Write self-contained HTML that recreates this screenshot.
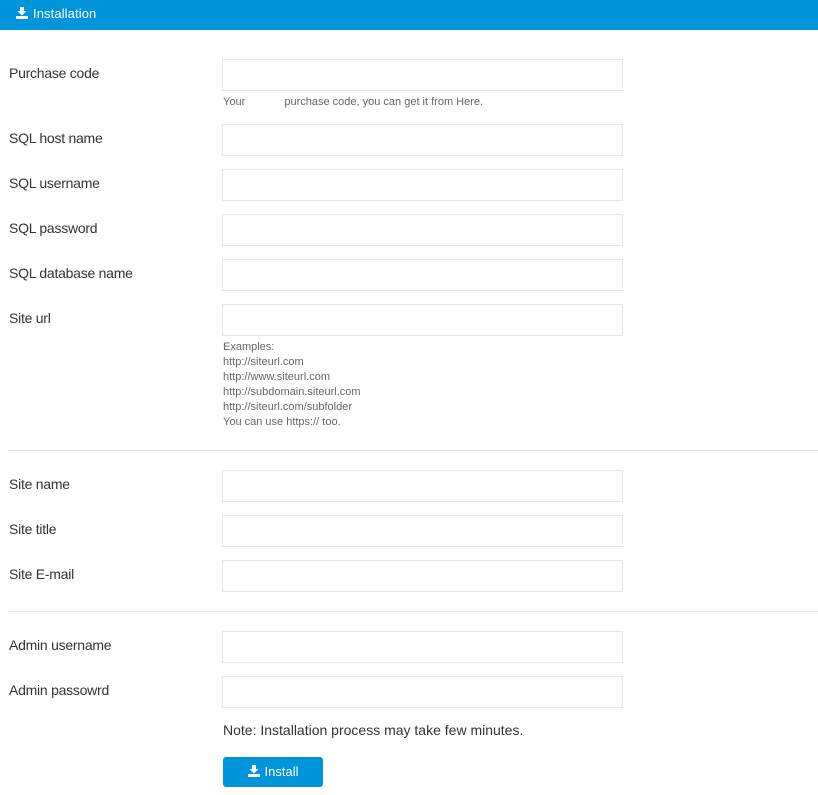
<!DOCTYPE html>
<html><head><meta charset="utf-8"><style>
*{margin:0;padding:0;box-sizing:border-box}
body{width:818px;height:795px;background:#fff;font-family:"Liberation Sans",sans-serif;color:#333;position:relative;overflow:hidden}
.hd{position:absolute;left:0;top:0;width:818px;height:30px;background:#0095da;color:#fff;font-size:13px;line-height:28px;padding-left:16px;letter-spacing:0.1px}
.hd svg,.btn svg{vertical-align:-1px;margin-right:5px}
.l{position:absolute;left:9px;font-size:14px;color:#333;letter-spacing:-0.25px}
.i{position:absolute;left:222px;width:401px;height:32px;border:1px solid #e6e6e6;background:#fff}
.h{position:absolute;left:223px;font-size:11px;color:#666;line-height:15px}
.hr{position:absolute;left:8px;width:810px;height:1px;background:#e5e5e5}
.note{position:absolute;left:223px;top:722px;font-size:14px;color:#333}
.btn{position:absolute;left:223px;top:757px;width:100px;height:30px;background:#0095da;border-radius:3px;color:#fff;font-size:13px;line-height:30px;text-align:center}
</style></head><body>
<div class="hd"><svg width="12" height="12" viewBox="0 0 12 12"><path d="M4 0h4v4h2.5L6 8.5 1.5 4H4z" fill="#fff"/><rect x="0" y="9" width="12" height="3" fill="#fff"/></svg>Installation</div>

<div class="l" style="top:65px">Purchase code</div><div class="i" style="top:59px"></div>
<div class="h" style="top:95px">Your <span style="display:inline-block;width:33px"></span> purchase code, you can get it from Here.</div>
<div class="l" style="top:130px">SQL host name</div><div class="i" style="top:124px"></div>
<div class="l" style="top:175px">SQL username</div><div class="i" style="top:169px"></div>
<div class="l" style="top:220px">SQL password</div><div class="i" style="top:214px"></div>
<div class="l" style="top:265px">SQL database name</div><div class="i" style="top:259px"></div>
<div class="l" style="top:310px">Site url</div><div class="i" style="top:304px"></div>
<div class="h" style="top:340px">Examples:<br>http://siteurl.com<br>http://www.siteurl.com<br>http://subdomain.siteurl.com<br>http://siteurl.com/subfolder<br>You can use https:// too.</div>
<div class="hr" style="top:450px"></div>
<div class="l" style="top:476px">Site name</div><div class="i" style="top:470px"></div>
<div class="l" style="top:521px">Site title</div><div class="i" style="top:515px"></div>
<div class="l" style="top:566px">Site E-mail</div><div class="i" style="top:560px"></div>
<div class="hr" style="top:611px"></div>
<div class="l" style="top:637px">Admin username</div><div class="i" style="top:631px"></div>
<div class="l" style="top:682px">Admin passowrd</div><div class="i" style="top:676px"></div>
<div class="note">Note: Installation process may take few minutes.</div>
<div class="btn"><svg width="12" height="12" viewBox="0 0 12 12"><path d="M4 0h4v4h2.5L6 8.5 1.5 4H4z" fill="#fff"/><rect x="0" y="9" width="12" height="3" fill="#fff"/></svg>Install</div>
</body></html>
